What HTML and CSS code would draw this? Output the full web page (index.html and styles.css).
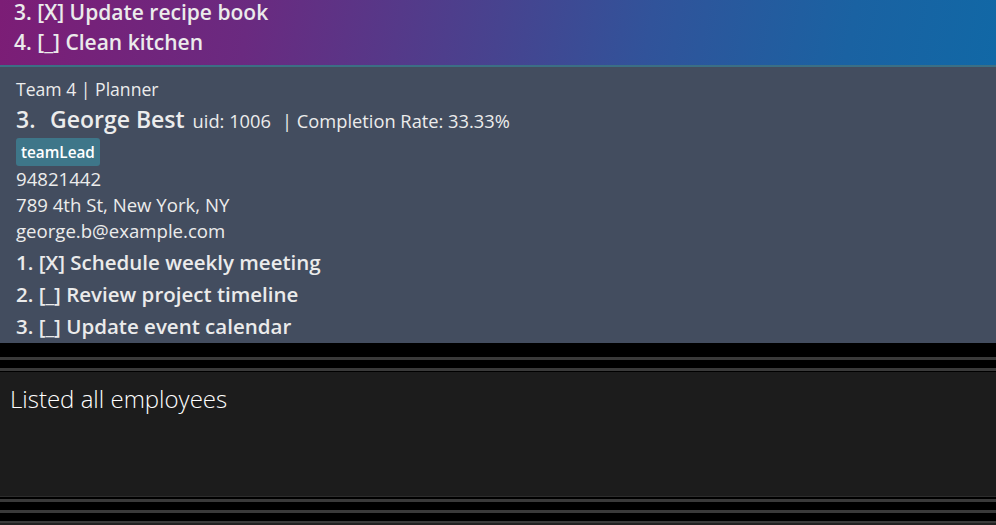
FILE: index.html
```html
<!DOCTYPE html>
<html>
<head>
<meta charset="utf-8">
<link rel="stylesheet" href="styles.css">
</head>
<body>
<div class="app">
  <div class="prev-card">
    <div class="task">3. [X] Update recipe book</div>
    <div class="task">4. [_] Clean kitchen</div>
  </div>
  <div class="card">
    <div class="team">Team 4 | Planner</div>
    <div class="header">
      <span class="idx">3.</span>
      <span class="name">George Best</span>
      <span class="uid">uid: 1006</span>
      <span class="rate">| Completion Rate: 33.33%</span>
    </div>
    <div class="tags"><span class="tag">teamLead</span></div>
    <div class="field">94821442</div>
    <div class="field">789 4th St, New York, NY</div>
    <div class="field">george.b@example.com</div>
    <div class="tasks">
      <div class="task">1. [X] Schedule weekly meeting</div>
      <div class="task">2. [_] Review project timeline</div>
      <div class="task">3. [_] Update event calendar</div>
    </div>
  </div>
  <div class="split">
    <div class="rule"></div>
    <div class="rule"></div>
  </div>
  <div class="result">Listed all employees</div>
  <div class="footer">
    <div class="rule"></div>
    <div class="rule"></div>
    <div class="rule"></div>
  </div>
</div>
</body>
</html>
```
FILE: styles.css
```css
html, body {
  margin: 0;
  padding: 0;
  background: #000;
  height: 100%;
  overflow: hidden;
}
.app {
  width: 996px;
  height: 525px;
  display: flex;
  flex-direction: column;
  font-family: "Open Sans", "Noto Sans", sans-serif;
  color: #ececec;
}
.prev-card {
  height: 67px;
  box-sizing: border-box;
  padding: 2px 14px 0;
  background: linear-gradient(100deg, #7c1d76 0%, #6a2a80 25%, #47438f 50%, #31539a 65%, #1a62a2 85%, #1168a6 100%);
  border-bottom: 2px solid #3b6f84;
  display: flex;
  flex-direction: column;
  gap: 10px;
}
.task {
  font-size: 20.5px;
  font-weight: 600;
  line-height: 32px;
  white-space: nowrap;
  color: #ebebeb;
}
.prev-card .task {
  font-size: 21px;
  line-height: 20px;
}
.card {
  height: 276px;
  box-sizing: border-box;
  background: #434d5f;
  padding: 9px 16px 0;
  overflow: hidden;
}
.team {
  font-size: 17.6px;
  line-height: 27px;
}
.header {
  display: flex;
  align-items: baseline;
  white-space: nowrap;
  line-height: 32px;
}
.idx {
  font-size: 23px;
  font-weight: 600;
  width: 34px;
}
.name {
  font-size: 23px;
  font-weight: 600;
  margin-right: 8px;
}
.uid {
  font-size: 18.3px;
  margin-right: 11px;
}
.rate {
  font-size: 18.3px;
}
.tags {
  display: flex;
  padding: 1px 0 0;
}
.tag {
  background: #3e7689;
  color: #fff;
  font-size: 15.3px;
  font-weight: 600;
  line-height: 28px;
  padding: 0 5px;
  border-radius: 3px;
}
.field {
  font-size: 18.6px;
  line-height: 26px;
}
.tasks {
  margin-top: 2px;
}
.split {
  height: 29px;
  display: flex;
  flex-direction: column;
  padding-top: 14px;
  gap: 8px;
  box-sizing: border-box;
}
.rule {
  height: 3px;
  background: #3a3a3a;
}
.result {
  height: 125px;
  background: #1c1c1c;
  box-sizing: border-box;
  padding: 10px 10px;
  font-size: 24px;
  font-weight: 300;
  color: #fff;
  border-bottom: 1px solid #2d2d2d;
}
.footer {
  flex: 1;
  display: flex;
  flex-direction: column;
  padding-top: 2px;
  gap: 8px;
}
.footer .rule:last-child {
  flex: 1;
  background: #202020;
  border-top: 2px solid #3a3a3a;
}
```
